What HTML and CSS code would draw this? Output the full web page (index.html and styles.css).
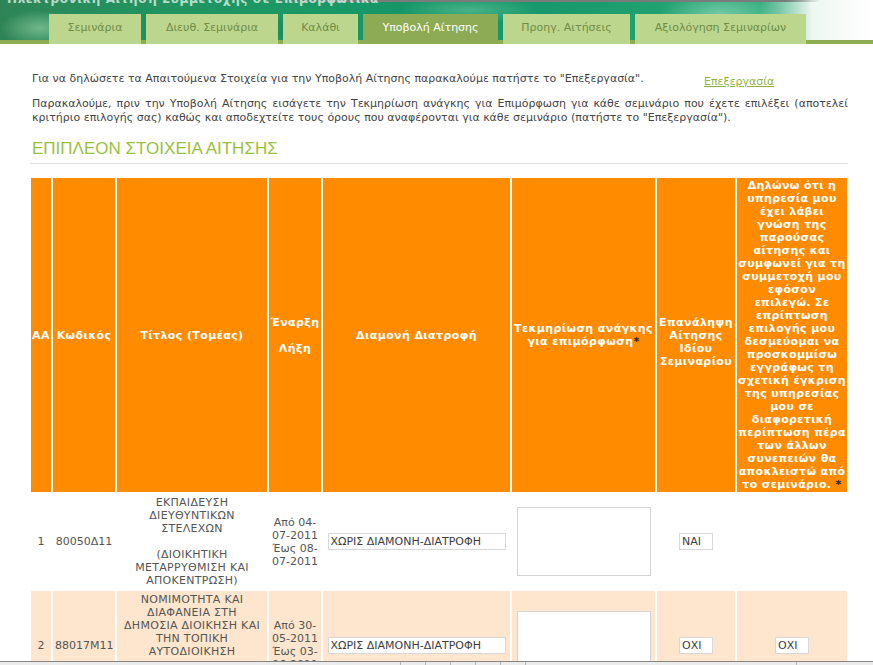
FILE: index.html
```html
<!DOCTYPE html>
<html lang="el">
<head>
<meta charset="utf-8">
<title>Υποβολή Αίτησης</title>
<link rel="stylesheet" href="styles.css">
</head>
<body>
<header class="banner">
  <div class="banner-title">Ηλεκτρονική Αίτηση Συμμετοχής σε Επιμορφωτικά</div>
  <nav class="tabs">
    <a class="tab tab-seminars" href="#">Σεμινάρια</a>
    <a class="tab tab-manage" href="#">Διευθ. Σεμινάρια</a>
    <a class="tab tab-cart" href="#">Καλάθι</a>
    <a class="tab tab-submit tab-active" href="#">Υποβολή Αίτησης</a>
    <a class="tab tab-prev" href="#">Προηγ. Αιτήσεις</a>
    <a class="tab tab-eval" href="#">Αξιολόγηση Σεμιναρίων</a>
  </nav>
</header>

<main class="content">
  <div class="intro">
    <p class="intro-text">Για να δηλώσετε τα Απαιτούμενα Στοιχεία για την Υποβολή Αίτησης παρακαλούμε πατήστε το "Επεξεργασία".</p>
    <a class="edit-link" href="#">Επεξεργασία</a>
  </div>
  <p class="note">Παρακαλούμε, πριν την Υποβολή Αίτησης εισάγετε την Τεκμηρίωση ανάγκης για Επιμόρφωση για κάθε σεμινάριο που έχετε επιλέξει (αποτελεί κριτήριο επιλογής σας) καθώς και αποδεχτείτε τους όρους που αναφέρονται για κάθε σεμινάριο (πατήστε το "Επεξεργασία").</p>

  <h2 class="section-title">ΕΠΙΠΛΕΟΝ ΣΤΟΙΧΕΙΑ ΑΙΤΗΣΗΣ</h2>

  <table class="seminars">
    <thead>
      <tr>
        <th class="c-aa">ΑΑ</th>
        <th class="c-code">Κωδικός</th>
        <th class="c-title">Τίτλος (Τομέας)</th>
        <th class="c-date">Έναρξη<br><br>Λήξη</th>
        <th class="c-stay">Διαμονή Διατροφή</th>
        <th class="c-need">Τεκμηρίωση ανάγκης για επιμόρφωση<span class="req">*</span></th>
        <th class="c-rep"><br>Επανάληψη Αίτησης Ιδίου Σεμιναρίου</th>
        <th class="c-decl">Δηλώνω ότι η υπηρεσία μου έχει λάβει γνώση της παρούσας αίτησης και συμφωνεί για τη συμμετοχή μου εφόσον επιλεγώ. Σε επρίπτωση επιλογής μου δεσμεύομαι να προσκομμίσω εγγράφως τη σχετική έγκριση της υπηρεσίας μου σε διαφορετική περίπτωση πέρα των άλλων συνεπειών θα αποκλειστώ από το σεμινάριο. <span class="req">*</span></th>
      </tr>
    </thead>
    <tbody>
      <tr>
        <td>1</td>
        <td>80050Δ11</td>
        <td class="cell-title">ΕΚΠΑΙΔΕΥΣΗ ΔΙΕΥΘΥΝΤΙΚΩΝ ΣΤΕΛΕΧΩΝ<br><br>(ΔΙΟΙΚΗΤΙΚΗ ΜΕΤΑΡΡΥΘΜΙΣΗ ΚΑΙ ΑΠΟΚΕΝΤΡΩΣΗ)</td>
        <td>Από 04-<wbr>07-2011 Έως 08-<wbr>07-2011</td>
        <td><input class="field field-wide" type="text" value="ΧΩΡΙΣ ΔΙΑΜΟΝΗ-ΔΙΑΤΡΟΦΗ" readonly></td>
        <td><textarea class="need-box"></textarea></td>
        <td><input class="field field-short" type="text" value="ΝΑΙ" readonly></td>
        <td></td>
      </tr>
      <tr class="alt">
        <td>2</td>
        <td>88017Μ11</td>
        <td class="cell-title">ΝΟΜΙΜΟΤΗΤΑ ΚΑΙ ΔΙΑΦΑΝΕΙΑ ΣΤΗ ΔΗΜΟΣΙΑ ΔΙΟΙΚΗΣΗ ΚΑΙ ΤΗΝ ΤΟΠΙΚΗ ΑΥΤΟΔΙΟΙΚΗΣΗ<br><br>(ΔΙΟΙΚΗΤΙΚΗ ΜΕΤΑΡΡΥΘΜΙΣΗ)</td>
        <td>Από 30-<wbr>05-2011 Έως 03-<wbr>06-2011</td>
        <td><input class="field field-wide" type="text" value="ΧΩΡΙΣ ΔΙΑΜΟΝΗ-ΔΙΑΤΡΟΦΗ" readonly></td>
        <td><textarea class="need-box"></textarea></td>
        <td><input class="field field-short" type="text" value="ΟΧΙ" readonly></td>
        <td><input class="field field-short" type="text" value="ΟΧΙ" readonly></td>
      </tr>
    </tbody>
  </table>
</main>

<div class="statusbar">
  <span class="status-main"></span>
  <span class="status-cell"></span>
  <span class="status-cell"></span>
  <span class="status-cell"></span>
  <span class="status-cell"></span>
  <span class="status-cell"></span>
  <span class="status-cell status-wide"></span>
  <span class="status-cell"></span>
</div>
</body>
</html>
```

FILE: styles.css
```css
html {
  overflow: hidden;
}

body {
  margin: 0;
  background: #ffffff;
  font-family: "DejaVu Sans", Verdana, sans-serif;
  font-size: 11px;
  color: #444444;
}

/* ---------- banner ---------- */
.banner {
  height: 44px;
  overflow: hidden;
  background:
    linear-gradient(to top, #8cad52 0, #8cad52 4px, transparent 4px),
    linear-gradient(90deg, transparent 0, transparent 30%, #7b7b7b 40%, #7b7b7b 90%, transparent 94%) 0 0 / 100% 2px no-repeat,
    linear-gradient(90deg, rgba(255,255,255,0) 0, rgba(255,255,255,0) 87%, rgba(245,250,246,0.96) 93%, #ffffff 100%),
    radial-gradient(ellipse 40px 18px at 40px 28px, rgba(170,220,180,0.55), transparent),
    radial-gradient(ellipse 70px 14px at 470px 10px, rgba(140,215,175,0.45), transparent),
    radial-gradient(ellipse 60px 22px at 720px 14px, rgba(170,230,200,0.55), transparent),
    radial-gradient(ellipse 30px 20px at 300px 30px, rgba(20,90,55,0.5), transparent),
    linear-gradient(90deg, #2f8456 0%, #22925f 15%, #1a9966 35%, #13946a 55%, #1d9f70 72%, #2fa97a 85%);
}

.banner-title {
  margin-top: -9px;
  height: 16px;
  padding-left: 7px;
  font-size: 12px;
  line-height: 16px;
  font-weight: bold;
  letter-spacing: 0.6px;
  color: rgba(225, 240, 230, 0.8);
  white-space: nowrap;
}

.tabs {
  display: flex;
  gap: 5px;
  margin-top: 7px;
  padding-left: 49px;
}

.tab {
  box-sizing: border-box;
  height: 30px;
  padding-top: 1px;
  background: #bdd68d;
  color: #6f8c47;
  font-size: 11px;
  line-height: 26px;
  text-align: center;
  text-decoration: none;
  white-space: nowrap;
}

.tab-seminars { width: 92px; }
.tab-manage { width: 132px; }
.tab-cart { width: 75px; }
.tab-submit { width: 135px; }
.tab-prev { width: 127px; }
.tab-eval { width: 171px; }

.tab-active {
  background: #8cab54;
  color: #ffffff;
}

/* ---------- content ---------- */
.content {
  margin: 0 25px 0 30px;
}

.intro {
  display: flex;
  align-items: flex-start;
  margin-top: 28px;
}

.intro-text {
  flex: 0 0 672px;
  margin: 0;
  padding-left: 2px;
  line-height: 14px;
}

.edit-link {
  padding-top: 3px;
  line-height: 14px;
  color: #8db53e;
  text-decoration: underline;
}

.note {
  margin: 8px 0 0;
  padding-left: 2px;
  line-height: 14px;
  text-align: justify;
}

.section-title {
  margin: 14px 0 0;
  padding: 0 0 4px 2px;
  border-bottom: 1px solid #dddddd;
  font-family: "Liberation Sans", Arial, sans-serif;
  font-size: 17px;
  line-height: 20px;
  font-weight: normal;
  color: #98c03e;
}

/* ---------- table ---------- */
.seminars {
  width: 820px;
  margin: 12px 0 0 -1px;
  table-layout: fixed;
  border-collapse: separate;
  border-spacing: 2px;
}

.seminars th {
  box-sizing: border-box;
  padding: 1px 1px;
  background: #ff8c00;
  color: #ffffff;
  font-size: 11px;
  line-height: 13px;
  font-weight: bold;
  letter-spacing: 0.4px;
  text-align: center;
  vertical-align: middle;
}

.seminars th.c-decl {
  letter-spacing: 0.35px;
}

.c-aa { width: 20px; }
.c-code { width: 62px; }
.c-title { width: 150px; }
.c-date { width: 52px; }
.c-stay { width: 187px; }
.c-need { width: 143px; }
.c-rep { width: 78px; }
.c-decl { width: 110px; }

.req {
  color: #222222;
}

.seminars td {
  padding: 2px 2px;
  font-size: 11px;
  line-height: 13px;
  color: #555555;
  text-align: center;
  vertical-align: middle;
}

.seminars td.cell-title {
  letter-spacing: 0.3px;
}

.seminars tr.alt td {
  background: #fde6cd;
}

.field {
  display: block;
  box-sizing: border-box;
  height: 17px;
  margin: 0 auto;
  padding: 0 2px;
  border: 1px solid #d8d8d8;
  background: #ffffff;
  font-family: "DejaVu Sans", Verdana, sans-serif;
  font-size: 11px;
  color: #3c3c3c;
  outline: none;
}

.field-wide { width: 178px; }
.field-short { width: 34px; }

.need-box {
  display: block;
  box-sizing: border-box;
  width: 134px;
  height: 69px;
  margin: 0 auto;
  border: 1px solid #d4d4d4;
  background: #ffffff;
  resize: none;
}

/* ---------- status bar ---------- */
.statusbar {
  position: fixed;
  left: 0;
  right: 0;
  bottom: 0;
  height: 3px;
  display: flex;
  border-top: 1px solid #858585;
  background: #ececec;
}

.status-main {
  flex: 0 0 400px;
}

.status-cell {
  flex: 0 0 24px;
  border-left: 1px solid #b5b5b5;
}

.status-wide {
  flex: 0 0 270px;
}
```
